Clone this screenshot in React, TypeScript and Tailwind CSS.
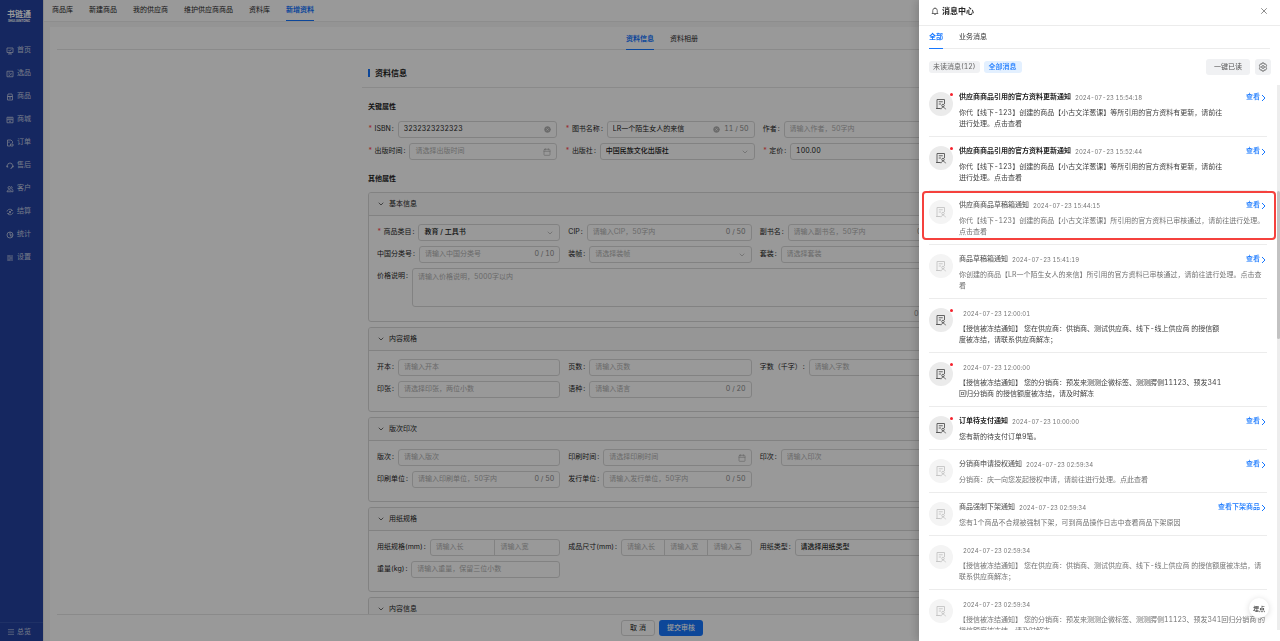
import React from 'react';
import {
  Calendar,
  ChevronDown,
  CircleX,
  Menu,
  X,
} from 'lucide-react';

type NavItem = { label: string; icon: React.ReactNode };

const sideNav: NavItem[] = [
  { label: '首页', icon: <><path d="M2 2h12v9H2z" /><path d="M5 6l2 2 4-3M4 14h8M8 11v3" /></> },
  { label: '选品', icon: <><path d="M2 2.500h12v11H2z" /><path d="M5 6h3M5 10l2 1 4-5M10 10h1" /></> },
  { label: '商品', icon: <><path d="M3 7h10v7H3zM4 2h8l1 5H3z" /><path d="M6 10h4" /></> },
  { label: '商城', icon: <><path d="M2 2.500h12v11H2zM2 7.500h12" /><path d="M6 10.500h4M6 2.500v5M10 2.500v5" /></> },
  { label: '订单', icon: <><path d="M8 14H3V2h7l3 3v3M6 5v3" /><path d="M9 10h5v4H9z" /></> },
  { label: '售后', icon: <><path d="M3 10V7a5 5 0 0110 0v3l-3 2v2" /><path d="M1.500 7v3h3M14.500 7v3h-3" /></> },
  { label: '客户', icon: <><circle cx="6.500" cy="5.500" r="2.500" /><path d="M2 13.500c0-5 9-5 9 0zM10 3c3 0 3 4 1 4.500 2 .5 3 2 3 6h-2" /></> },
  { label: '结算', icon: <><path d="M2 7c1-5 8-6 11-2h-3M14 9c-1 5-8 6-11 2h3" /><path d="M6 6l2 2 2-2M8 8v3M6 8.500h4" /></> },
  { label: '统计', icon: <><circle cx="8" cy="8" r="6" /><path d="M8 2v6h6M8 8l3 4" /></> },
  { label: '设置', icon: <path d="M2 4h12M2 8h12M2 12h12M6 3v2M10 7v2M6 11v2" /> },
];

const topTabs = ['商品库', '新建商品', '我的供应商', '维护供应商商品', '资料库', '新增资料'];

type Message = {
  title?: string;
  date: string;
  text: string;
  action?: string;
  unread?: boolean;
  marked?: boolean;
};

const messages: Message[] = [
  { title: '供应商商品引用的官方资料更新通知', date: '2024-07-23 15:54:18', text: '你代【线下-123】创建的商品【小古文洋葱课】等所引用的官方资料有更新，请前往\n进行处理。点击查看', action: '查看', unread: true },
  { title: '供应商商品引用的官方资料更新通知', date: '2024-07-23 15:52:44', text: '你代【线下-123】创建的商品【小古文洋葱课】等所引用的官方资料有更新，请前往\n进行处理。点击查看', action: '查看', unread: true },
  { title: '供应商商品草稿箱通知', date: '2024-07-23 15:44:15', text: '你代【线下-123】创建的商品【小古文洋葱课】所引用的官方资料已审核通过，请前往进行处理。\n点击查看', action: '查看', marked: true },
  { title: '商品草稿箱通知', date: '2024-07-23 15:41:19', text: '你创建的商品【LR一个陌生女人的来信】所引用的官方资料已审核通过，请前往进行处理。点击查\n看', action: '查看' },
  { date: '2024-07-23 12:00:01', text: '【授信被冻结通知】 您在供应商：供销商、测试供应商、线下-线上供应商 的授信额\n度被冻结，请联系供应商解冻；', unread: true },
  { date: '2024-07-23 12:00:00', text: '【授信被冻结通知】 您的分销商：预发来测测企微标签、测测腭侧11123、预发341\n回归分销商 的授信额度被冻结，请及时解冻', unread: true },
  { title: '订单待支付通知', date: '2024-07-23 10:00:00', text: '您有新的待支付订单9笔。', action: '查看', unread: true },
  { title: '分销商申请授权通知', date: '2024-07-23 02:59:34', text: '分销商：庆一向您发起授权申请，请前往进行处理。点此查看', action: '查看' },
  { title: '商品强制下架通知', date: '2024-07-23 02:59:34', text: '您有1个商品不合规被强制下架，可到商品操作日志中查看商品下架原因', action: '查看下架商品' },
  { date: '2024-07-23 02:59:34', text: '【授信被冻结通知】 您在供应商：供销商、测试供应商、线下-线上供应商 的授信额度被冻结，请\n联系供应商解冻；' },
  { date: '2024-07-23 02:59:34', text: '【授信被冻结通知】 您的分销商：预发来测测企微标签、测测腭侧11123、预发341回归分销商 的\n授信额度被冻结，请及时解冻' },
];

type FieldProps = {
  id: string;
  label: string;
  required?: boolean;
  value?: string;
  placeholder?: string;
  count?: string;
  kind?: 'text' | 'select' | 'date';
  clearable?: boolean;
};

const FieldLabel = ({ id, label, required }: { id: string; label: string; required?: boolean }) => (
  <label htmlFor={id} className="mr-1 flex h-[17px] shrink-0 items-center whitespace-nowrap text-[#262626]">
    {required && <span className="mr-[2px] text-[#ff4d4f]">*</span>}
    {label}
    <span className="ml-px">:</span>
  </label>
);

const Field = ({ id, label, required, value, placeholder, count, kind = 'text', clearable }: FieldProps) => (
  <div className="flex min-w-0 items-center">
    <FieldLabel id={id} label={label} required={required} />
    <div className="flex h-[17px] min-w-0 flex-1 items-center gap-1 rounded-[3px] border border-[#d9d9d9] px-[5px]">
      {kind === 'select' ? (
        <select
          id={id}
          className={`min-w-0 flex-1 appearance-none bg-transparent outline-none ${value ? 'font-medium text-[#1a1a1a]' : 'text-[#b0b0b0]'}`}
        >
          <option>{value || placeholder}</option>
        </select>
      ) : (
        <input
          id={id}
          defaultValue={value}
          placeholder={placeholder}
          className="w-full min-w-0 flex-1 bg-transparent text-[#1a1a1a] outline-none placeholder:text-[#b0b0b0]"
        />
      )}
      {clearable && <CircleX size={7} className="shrink-0 fill-[#b4b4b4] text-[#b4b4b4] [&_path]:stroke-white" />}
      {count && <span className="shrink-0 text-[#8c8c8c]">{count}</span>}
      {kind === 'select' && <ChevronDown size={8} className="shrink-0 text-[#a8a8a8]" />}
      {kind === 'date' && <Calendar size={8} strokeWidth={1.8} className="shrink-0 text-[#a8a8a8]" />}
    </div>
  </div>
);

const SizeField = ({ id, label, parts }: { id: string; label: string; parts: string[] }) => (
  <div className="flex min-w-0 items-center">
    <FieldLabel id={id} label={label} />
    <div className="flex h-[17px] min-w-0 flex-1 divide-x divide-[#d9d9d9] rounded-[3px] border border-[#d9d9d9]">
      {parts.map((part, i) => (
        <input
          key={part}
          id={i === 0 ? id : undefined}
          aria-label={part}
          placeholder={part}
          className="w-0 flex-1 px-[5px] outline-none placeholder:text-[#b0b0b0]"
        />
      ))}
    </div>
  </div>
);

const Panel = ({ title, children }: { title: string; children?: React.ReactNode }) => (
  <section className="shrink-0 overflow-hidden rounded-[3px] border border-[#d9d9d9]">
    <button type="button" className="flex h-[23px] w-full items-center gap-1 border-b border-[#d9d9d9] bg-[#fafafa] px-2 text-[#262626]">
      <ChevronDown size={8} />
      {title}
    </button>
    {children && (
      <div className="grid grid-cols-3 gap-x-2 gap-y-[5px] pt-2 pr-3 pb-[13px] pl-2">{children}</div>
    )}
  </section>
);

const Sidebar = () => (
  <aside className="flex w-[43px] shrink-0 flex-col bg-[#2342a0] text-[#c5cde4]">
    <div className="flex h-[39px] flex-col items-center pt-[9px] pr-[5px] text-white">
      <span className="text-[8px] leading-[10px] font-bold">书链通</span>
      <span className="text-[3px] leading-[4px] font-bold">SHULIANTONG</span>
    </div>
    <nav className="flex flex-1 flex-col">
      {sideNav.map((item) => (
        <a key={item.label} href="#" className="flex h-[23px] items-center gap-[3px] pl-[6px]">
          <svg width="8" height="8" viewBox="0 0 16 16" fill="none" stroke="currentColor" strokeWidth="1.6">
            {item.icon}
          </svg>
          {item.label}
        </a>
      ))}
    </nav>
    <button type="button" className="flex h-[19px] items-center gap-[2px] border-t border-[#3452aa] pl-[7px]">
      <Menu size={8} />
      总览
    </button>
  </aside>
);

const MaterialForm = () => (
  <form className="mx-auto w-full max-w-[600px] px-[6px]">
    <div className="-ml-[6px] flex h-[38px] items-center border-b border-[#e6e6e6] pt-[8px] pl-[6px]">
      <h2 className="border-l-2 border-[#1677ff] pl-[5px] text-[8px] leading-[8px] font-semibold">资料信息</h2>
    </div>
    <h3 className="mt-[13px] font-semibold leading-[12px]">关键属性</h3>
    <div className="mt-2 grid grid-cols-3 gap-x-2 gap-y-[5px] pr-1">
      <Field id="isbn" label="ISBN" required value="3232323232323" clearable />
      <Field id="name" label="图书名称" required value="LR一个陌生女人的来信" count="11 / 50" clearable />
      <Field id="author" label="作者" placeholder="请输入作者，50字内" />
      <Field id="pubdate" label="出版时间" required placeholder="请选择出版时间" kind="date" />
      <Field id="press" label="出版社" required value="中国民族文化出版社" kind="select" />
      <Field id="price" label="定价" required value="100.00" />
    </div>
    <h3 className="mt-[13px] mb-[7px] font-semibold leading-[12px]">其他属性</h3>
    <div className="flex flex-col gap-[5px]">
      <Panel title="基本信息">
        <Field id="category" label="商品类目" required value="教育 / 工具书" kind="select" />
        <Field id="cip" label="CIP" placeholder="请输入CIP，50字内" count="0 / 50" />
        <Field id="subtitle" label="副书名" placeholder="请输入副书名，50字内" count="0 / 50" />
        <Field id="clc" label="中国分类号" placeholder="请输入中国分类号" count="0 / 10" />
        <Field id="binding" label="装帧" placeholder="请选择装帧" kind="select" />
        <Field id="set" label="套装" placeholder="请选择套装" kind="select" />
        <div className="col-span-3 flex">
          <FieldLabel id="priceNote" label="价格说明" />
          <div className="flex flex-1 flex-col">
            <textarea
              id="priceNote"
              placeholder="请输入价格说明，5000字以内"
              className="h-[39px] resize-none rounded-[3px] border border-[#d9d9d9] px-[5px] py-[3px] leading-[10px] outline-none placeholder:text-[#b0b0b0]"
            />
            <span className="-mb-3 text-right leading-[13px] text-[#8c8c8c]">0 / 5000</span>
          </div>
        </div>
      </Panel>
      <Panel title="内容规格">
        <Field id="format" label="开本" placeholder="请输入开本" />
        <Field id="pages" label="页数" placeholder="请输入页数" />
        <Field id="words" label="字数（千字）" placeholder="请输入字数" />
        <Field id="sheets" label="印张" placeholder="请选择印张，两位小数" />
        <Field id="language" label="语种" placeholder="请输入语言" count="0 / 20" />
      </Panel>
      <Panel title="版次印次">
        <Field id="edition" label="版次" placeholder="请输入版次" />
        <Field id="printDate" label="印刷时间" placeholder="请选择印刷时间" kind="date" />
        <Field id="printing" label="印次" placeholder="请输入印次" />
        <Field id="printer" label="印刷单位" placeholder="请输入印刷单位，50字内" count="0 / 50" />
        <Field id="issuer" label="发行单位" placeholder="请输入发行单位，50字内" count="0 / 50" />
      </Panel>
      <Panel title="用纸规格">
        <SizeField id="paperSize" label="用纸规格(mm)" parts={['请输入长', '请输入宽']} />
        <SizeField id="bookSize" label="成品尺寸(mm)" parts={['请输入长', '请输入宽', '请输入高']} />
        <Field id="paperType" label="用纸类型" value="请选择用纸类型" kind="select" />
        <Field id="weight" label="重量(kg)" placeholder="请输入重量，保留三位小数" />
      </Panel>
      <Panel title="内容信息" />
    </div>
  </form>
);

const MessageRow = ({ message }: { message: Message }) => (
  <li className="relative flex gap-[6px] border-b border-[#ececec] pt-2 pb-[7px]">
    {message.marked && (
      <span className="pointer-events-none absolute top-0 -right-[9px] bottom-[4px] -left-[7px] rounded-[4px] border-2 border-[#f5413d]" />
    )}
    <span
      className={`relative mt-px flex size-6 shrink-0 items-center justify-center rounded-full ${
        message.unread ? 'bg-[#ebebeb] text-[#555]' : 'bg-[#f4f4f4] text-[#c4c4c4]'
      }`}
    >
      <svg width="12" height="12" viewBox="0 0 24 24" fill="none" stroke="currentColor" strokeWidth="1.8">
        <path d="M11 21H4V3h15v9M7.500 7.500h8M7.500 12H12" />
        <path d="M2 21h9" />
        <circle cx="16" cy="15" r="2.500" />
        <path d="M12 22.500c1-2 2-4 4-4.500 2 .5 4 2 5 4.500" />
      </svg>
      {message.unread && <i className="absolute top-px right-0 size-[3px] rounded-full bg-[#f5222d]" />}
    </span>
    <div className="min-w-0 flex-1">
      <div className="flex h-[13px] items-center gap-1 whitespace-nowrap">
        <strong className={message.unread ? 'font-semibold text-[#1f1f1f]' : 'font-medium text-[#666]'}>
          {message.title}
        </strong>
        <time className="text-[6px] text-[#777]">{message.date}</time>
        {message.action && (
          <a href="#" className="ml-auto flex items-center gap-px pr-px font-medium text-[#1677ff]">
            {message.action}
            <svg width="5" height="8" viewBox="0 0 5 8" fill="none" stroke="currentColor">
              <path d="M1 1l3 3-3 3" />
            </svg>
          </a>
        )}
      </div>
      <p className={`mt-[3px] leading-[11px] whitespace-pre ${message.unread ? 'text-[#404040]' : 'text-[#737373]'}`}>
        {message.text}
      </p>
    </div>
  </li>
);

const MessageDrawer = () => (
  <div role="dialog" aria-label="消息中心" className="fixed inset-y-0 right-0 flex w-[361px] flex-col bg-white shadow-[-3px_0_8px_rgba(0,0,0,0.15)]">
    <header className="flex h-[26px] shrink-0 items-center border-b border-[#ececec] pr-[11px] pb-[3px] pl-3">
      <svg width="8" height="8" viewBox="0 0 16 16" fill="none" stroke="#333" strokeWidth="1.4">
        <path d="M1.500 13h13M3.500 13V7a4.500 4.500 0 019 0v6M6.500 15h3M8 1v2" />
      </svg>
      <h1 className="ml-[3px] text-[8px] font-semibold text-[#262626]">消息中心</h1>
      <button type="button" aria-label="关闭" className="ml-auto text-[#777]">
        <X size={10} strokeWidth={2} />
      </button>
    </header>
    <div role="tablist" className="mx-[10px] flex h-[23px] shrink-0 gap-4 border-b border-[#ececec]">
      <button type="button" role="tab" aria-selected="true" className="-mb-px border-b border-[#1677ff] pt-px font-semibold text-[#1677ff]">全部</button>
      <button type="button" role="tab" aria-selected="false" className="-mb-px border-b border-transparent pt-px text-[#333]">业务消息</button>
    </div>
    <div className="mt-[10px] mr-[9px] ml-[10px] flex h-4 shrink-0 items-center">
      <button type="button" className="h-3 rounded-[3px] bg-[#f0f1f3] px-1 text-[#666]">未读消息(12)</button>
      <button type="button" className="ml-1 h-3 rounded-[3px] bg-[#e3f0ff] px-[5px] font-medium text-[#1677ff]">全部消息</button>
      <button type="button" className="ml-auto h-4 rounded-[3px] bg-[#f0f1f3] px-2 text-[#555]">一键已读</button>
      <button type="button" aria-label="消息设置" className="ml-[5px] flex size-4 items-center justify-center rounded-[3px] bg-[#f0f1f3] text-[#555]">
        <svg width="10" height="10" viewBox="0 0 16 16" fill="none" stroke="currentColor" strokeWidth="1.3">
          <path d="M6.500 1.500h3l.6 1.900 1.900-.4 1.700 2.500L12.500 8l1.200 2.500L12 13l-1.900-.4-.6 1.900h-3l-.6-1.900L4 13l-1.700-2.500L3.500 8 2.300 5.500 4 3l1.900.4z" />
          <circle cx="8" cy="8" r="2.200" />
        </svg>
      </button>
    </div>
    <div className="mt-2 mb-[11px] flex min-h-0 flex-1">
      <ul className="min-w-0 flex-1 overflow-hidden pr-[10px] pl-[10px]">
        {messages.map((message, i) => (
          <MessageRow key={i} message={message} />
        ))}
      </ul>
      <div className="mt-[2px] w-[3px] bg-[#ededed] pt-[106px]">
        <div className="h-[148px] rounded-[2px] bg-[#c2c2c2]" />
      </div>
    </div>
    <button type="button" className="absolute right-[11px] bottom-[23px] size-5 rounded-full bg-white text-[6px] font-medium text-[#333] shadow-[0_1px_6px_rgba(0,0,0,0.15)]">
      埋点
    </button>
  </div>
);

export default function App() {
  return (
    <div className="flex h-screen overflow-hidden bg-[#f7f7f7] font-['Inter','Noto_Sans_CJK_SC',sans-serif] text-[7px] text-[#1f1f1f] tabular-nums">
      <Sidebar />
      <div className="flex min-w-0 flex-1 flex-col border-l border-[#e6e6e6]">
        <nav className="flex h-[22px] shrink-0 gap-4 border-b border-[#ebebeb] bg-white pl-2">
          {topTabs.map((tab) => (
            <a
              key={tab}
              href="#"
              className={`flex h-[21px] items-center border-b ${
                tab === '新增资料' ? 'border-[#1677ff] font-semibold text-[#1677ff]' : 'border-transparent'
              }`}
            >
              {tab}
            </a>
          ))}
        </nav>
        <main className="mt-[5px] ml-[6px] flex min-h-0 flex-1 flex-col bg-white">
          <div role="tablist" className="mr-[13px] ml-[7px] flex h-[23px] shrink-0 justify-center gap-4 border-b border-[#e6e6e6]">
            <button type="button" role="tab" aria-selected="true" className="-mb-px border-b border-[#1677ff] pt-[2px] font-semibold text-[#1677ff]">资料信息</button>
            <button type="button" role="tab" aria-selected="false" className="-mb-px border-b border-transparent pt-[2px]">资料相册</button>
          </div>
          <div className="min-h-0 flex-1 overflow-hidden pr-[6px]">
            <MaterialForm />
          </div>
          <footer className="ml-[7px] flex h-[27px] shrink-0 items-center justify-center gap-1 border-t border-[#e6e6e6] pr-[13px]">
            <button type="button" className="h-4 rounded-[3px] border border-[#d9d9d9] px-2">取 消</button>
            <button type="button" className="h-4 rounded-[3px] bg-[#1677ff] px-2 font-medium text-white">提交审核</button>
          </footer>
        </main>
      </div>
      <div className="fixed inset-0 bg-black/40" />
      <MessageDrawer />
    </div>
  );
}
